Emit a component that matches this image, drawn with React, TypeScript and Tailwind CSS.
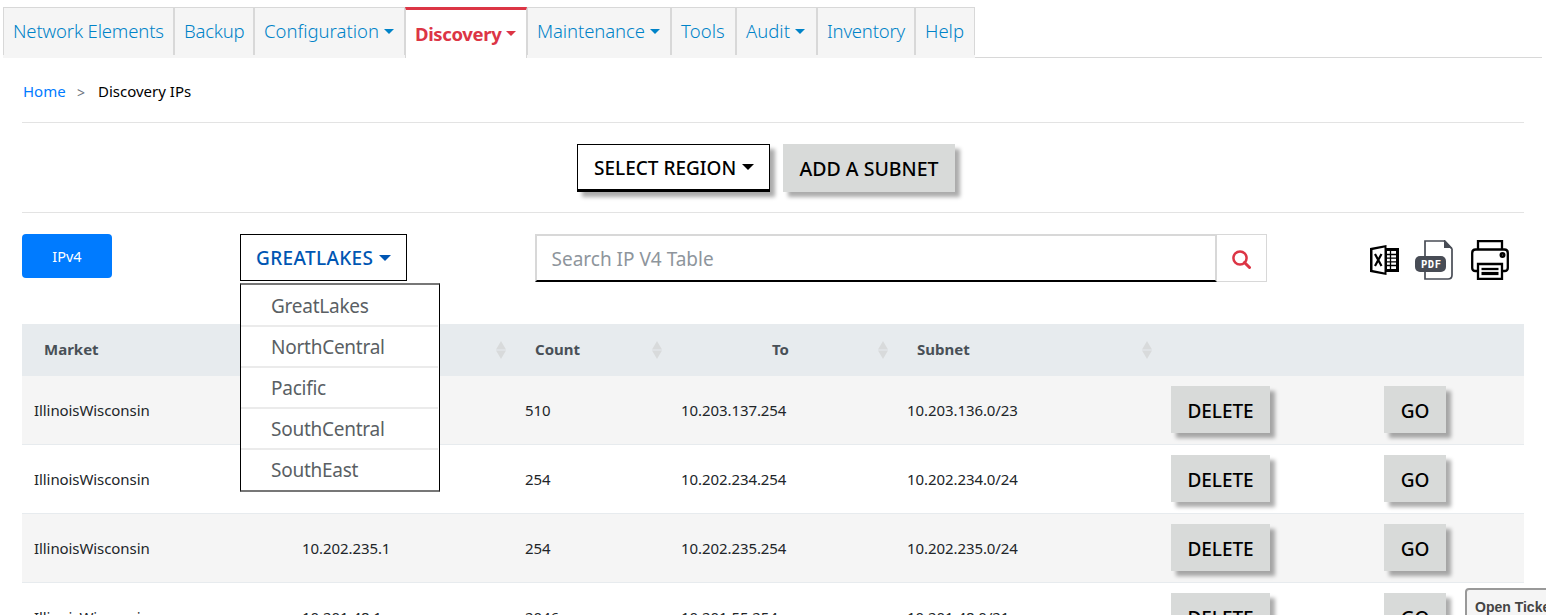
import React from "react";

const tabs = [
  { label: "Network Elements", width: "w-[171px]", tracking: "tracking-[-0.15px]" },
  { label: "Backup", width: "w-[80px]", tracking: "tracking-[-0.2px]" },
  { label: "Configuration", width: "w-[151px]", tracking: "tracking-[0px]", caret: true },
  { label: "Discovery", width: "w-[122px]", tracking: "tracking-[-0.35px]", caret: true, active: true },
  { label: "Maintenance", width: "w-[144px]", tracking: "tracking-[-0.1px]", caret: true },
  { label: "Tools", width: "w-[65px]", tracking: "tracking-[0.1px]" },
  { label: "Audit", width: "w-[81px]", tracking: "tracking-[0px]", caret: true },
  { label: "Inventory", width: "w-[98px]", tracking: "tracking-[-0.2px]" },
  { label: "Help", width: "w-[60px]", tracking: "tracking-[0px]" },
];

const regions = ["GreatLakes", "NorthCentral", "Pacific", "SouthCentral", "SouthEast"];

const rows = [
  { market: "IllinoisWisconsin", from: "", count: "510", to: "10.203.137.254", subnet: "10.203.136.0/23" },
  { market: "IllinoisWisconsin", from: "", count: "254", to: "10.202.234.254", subnet: "10.202.234.0/24" },
  { market: "IllinoisWisconsin", from: "10.202.235.1", count: "254", to: "10.202.235.254", subnet: "10.202.235.0/24" },
  { market: "IllinoisWisconsin", from: "10.201.48.1", count: "2046", to: "10.201.55.254", subnet: "10.201.48.0/21" },
];

const columns = "grid grid-cols-[269px_223px_156px_226px_264px_213px_151px]";

function Caret({ large }: { large?: boolean }) {
  return large ? (
    <span className="mb-[2px] ml-[6px] inline-block h-0 w-0 border-x-[6px] border-t-[6px] border-x-transparent border-t-current" />
  ) : (
    <span className="mb-[4px] ml-[5px] inline-block h-0 w-0 border-x-[5px] border-t-[5px] border-x-transparent border-t-current align-middle" />
  );
}

type TabProps = { label: string; width: string; tracking: string; caret?: boolean; active?: boolean };

function Tab({ label, width, tracking, caret, active }: TabProps) {
  if (active) {
    return (
      <div className={`${width} ${tracking} h-[51px] shrink-0 whitespace-nowrap border-x border-t-[3px] border-x-[#d8d8d8] border-t-[#dc3545] bg-white pl-[9px] pt-[10px] text-[18.5px] font-bold leading-[28px] text-[#dc3545]`}>
        {label}
        <Caret />
      </div>
    );
  }
  return (
    <div className={`${width} ${tracking} h-[51px] shrink-0 bg-[#f5f5f5]`}>
      <div className="h-[48px] whitespace-nowrap border-x border-t border-[#d8d8d8] pl-[9px] pt-[9px] text-[18.5px] font-light leading-[28px] text-[#0083c8]">
        {label}
        {caret && <Caret />}
      </div>
    </div>
  );
}

function SortIcon() {
  return (
    <svg width="10" height="18" viewBox="0 0 10 18" className="fill-[#d8dadb]">
      <path d="M5 0 10 8.5H0ZM0 9.5h10L5 18Z" />
    </svg>
  );
}

function HeadCell({ label, pad, sort }: { label: string; pad: string; sort?: boolean }) {
  return (
    <div className={`flex items-center justify-between pr-[8px] ${pad}`}>
      <span className="pb-[2px]">{label}</span>
      {sort && <SortIcon />}
    </div>
  );
}

function GrayButton({ label, size }: { label: string; size: string }) {
  return (
    <button className={`${size} flex items-center justify-center whitespace-nowrap bg-[#d8dad9] font-medium text-black shadow-[5px_5px_4px_rgba(0,0,0,0.33)]`}>
      {label}
    </button>
  );
}

function ExcelIcon() {
  return (
    <svg width="30" height="30" viewBox="0 0 30 30">
      <path d="M15 3h14v24H15Z" fill="#000" />
      <path d="M17 6h9v18h-9Z" fill="#fff" />
      <path d="M17 9.500h9M17 13.200h9M17 16.800h9M17 20.500h9M20.500 6v18" stroke="#000" strokeWidth="1.3" />
      <path d="M0 3 16.500 0v30L0 27Z" fill="#000" />
      <path d="M2.500 5 14.500 2.500v25L2.500 25Z" fill="#fff" />
      <path d="m5 9 6.500 12M11.500 9 5 21" stroke="#000" strokeWidth="2.200" fill="none" />
    </svg>
  );
}

function PdfIcon() {
  return (
    <svg width="38" height="40" viewBox="0 0 38 40">
      <path d="M10 1h19l8 8v26q0 4-4 4H10Z" fill="#fff" stroke="#484c55" strokeWidth="1.700" />
      <path d="M29 0v8h8.500L30 0Z" fill="#484c55" />
      <rect x="0" y="16" width="31" height="16" rx="5" fill="#484c55" />
      <text x="6" y="28" fontSize="10.500" fontWeight="700" letterSpacing="0.500" fill="#fff" fontFamily="DejaVu Sans Mono, monospace">PDF</text>
    </svg>
  );
}

function PrinterIcon() {
  return (
    <svg width="38" height="40" viewBox="0 0 38 40" fill="none" stroke="#000" strokeWidth="2.300">
      <path d="M7 9V1.200h24V9" />
      <path d="M7 31H4.500Q1.200 31 1.200 28V13q0-3.500 3.500-3.500h28.600q3.500 0 3.500 3.500v15q0 3-3.300 3H31" />
      <path d="M7 24h24v14.800H7Z" fill="#fff" />
      <path d="M10.500 29h17" strokeWidth="2.300" />
      <path d="M10.500 33.500h17" strokeWidth="3.200" />
      <circle cx="31.500" cy="15" r="1.700" strokeWidth="2.600" />
    </svg>
  );
}

export default function App() {
  return (
    <div className="relative h-[615px] w-[1546px] overflow-hidden bg-white font-['Noto_Sans',sans-serif] text-black">
      <nav className="ml-[3px] flex h-[58px] w-[1539px] pt-[7px]">
        {tabs.map((t) => (
          <Tab key={t.label} {...t} />
        ))}
        <div className="grow border-b border-[#d8d8d8]" />
      </nav>

      <main className="mx-[22px] w-[1502px]">
        <div className="flex h-[65px] items-center border-b border-[#e3e3e3] pl-[1px] pt-[2px] text-[15px]">
          <span className="w-[54px] text-[#007bff]">Home</span>
          <span className="w-[21px] pt-[2px] text-[14px] text-[#6c757d]">&gt;</span>
          <span>Discovery IPs</span>
        </div>

        <div className="flex h-[90px] items-start gap-[13px] border-b border-[#e3e3e3] pl-[555px] pt-[21px]">
          <button className="flex h-[48px] w-[193px] items-center whitespace-nowrap border border-b-[3px] border-black bg-white pl-[16px] pt-[2px] text-[19px] font-medium shadow-[5px_5px_4px_rgba(0,0,0,0.33)]">
            SELECT REGION
            <Caret large />
          </button>
          <GrayButton label="ADD A SUBNET" size="h-[48px] w-[172px] pt-[2px] text-[19.500px]" />
        </div>

        <div className="flex h-[111px] pt-[21px]">
          <button className="h-[44px] w-[90px] rounded-[4px] bg-[#007bff] pt-[1px] text-[14.500px] text-white">IPv4</button>
          <div className="relative ml-[128px]">
            <button className="flex h-[47px] w-[167px] items-center whitespace-nowrap border border-black bg-white pl-[15px] pt-[2px] text-[19px] font-medium tracking-[0.35px] text-[#0056b3]">
              GREATLAKES
              <Caret large />
            </button>
            <ul className="absolute left-0 top-[49px] z-10 h-[209px] w-[200px] border-x border-y-2 border-x-black border-y-[#777] bg-white pt-px text-[19px] tracking-[-0.25px] text-[#5a5f64]">
              {regions.map((r) => (
                <li key={r} className="mr-px h-[41px] border-b-2 border-[#ebebeb] pl-[30px] leading-[41px] last:border-b-0">
                  {r}
                </li>
              ))}
            </ul>
          </div>
          <div className="ml-[128px] flex h-[48px]">
            <div className="w-[682px] border-2 border-[#d8d8d8] border-b-black pl-[14.500px] text-[19px] leading-[46px] text-[#8e959c]">
              Search IP V4 Table
            </div>
            <button className="flex w-[50px] items-center justify-center border border-l-0 border-[#d8d8d8] pt-[2px]">
              <svg width="19" height="19" viewBox="0 0 19 19" fill="none" stroke="#dc3545" strokeWidth="2.500">
                <circle cx="8" cy="8" r="6.600" />
                <path d="m12.500 12.500 5 5" strokeWidth="3" strokeLinecap="round" />
              </svg>
            </button>
          </div>
          <div className="ml-[103px] flex items-start pt-[6px]">
            <div className="pt-[5px]"><ExcelIcon /></div>
            <div className="ml-[15px]"><PdfIcon /></div>
            <div className="ml-[18px]"><PrinterIcon /></div>
          </div>
        </div>

        <div>
          <div className={`${columns} h-[52px] bg-[#e7ebee] text-[15px] font-bold text-[#495057]`}>
            <HeadCell label="Market" pad="pl-[22px]" />
            <HeadCell label="" pad="" sort />
            <HeadCell label="Count" pad="pl-[21px]" sort />
            <HeadCell label="To" pad="pl-[102px]" sort />
            <HeadCell label="Subnet" pad="pl-[21px]" sort />
            <HeadCell label="" pad="" />
            <HeadCell label="" pad="" />
          </div>
          {rows.map((r) => (
            <div key={r.subnet} className={`${columns} h-[69px] items-center border-b border-[#e7ebee] text-[15px] tracking-[-0.08px] text-[#212529] odd:bg-white even:bg-[#f5f5f5]`}>
              <span className="pl-[12px]">{r.market}</span>
              <span className="pl-[11px]">{r.from}</span>
              <span className="pl-[11px]">{r.count}</span>
              <span className="pl-[11px]">{r.to}</span>
              <span className="pl-[11px]">{r.subnet}</span>
              <span className="pb-[2px] pl-[11px]"><GrayButton label="DELETE" size="h-[47px] w-[99px] pt-[4px] text-[19px]" /></span>
              <span className="pb-[2px] pl-[11px]"><GrayButton label="GO" size="h-[47px] w-[62px] pt-[4px] text-[19px]" /></span>
            </div>
          ))}
        </div>
      </main>

      <div className="absolute left-[1465px] top-[588px] h-[40px] w-[110px] whitespace-nowrap rounded-[4px] border-2 border-[#999] bg-[#f5f5f5] pl-[8px] pt-[7px] font-['Liberation_Sans',sans-serif] text-[14px] font-bold leading-[20px] text-[#444]">
        Open Ticket
      </div>
    </div>
  );
}
